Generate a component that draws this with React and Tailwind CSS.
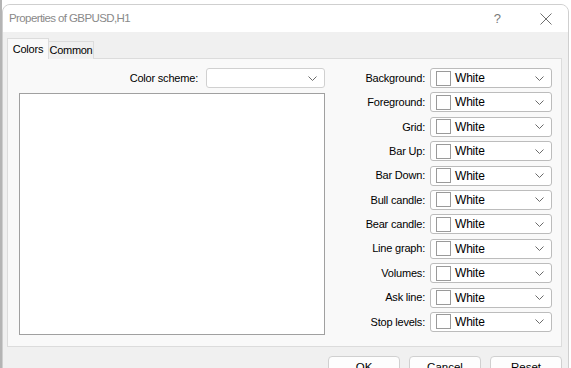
import React from "react";

const FONT = { fontFamily: '"Liberation Sans", Arial, sans-serif' };

function Chevron() {
  return (
    <svg width="9" height="5" viewBox="0 0 9 5" className="shrink-0">
      <path d="M0.5 0.5 L4.5 4.5 L8.5 0.5" fill="none" stroke="#6b6b6b" strokeWidth="1" />
    </svg>
  );
}

function ColorSelect() {
  return (
    <div className="w-[122px] h-[20px] bg-white border border-[#bcbcbc] rounded-[3px] flex items-center pl-[5px] pr-[7px]">
      <div className="w-[15px] h-[15px] border border-[#9a9a9a] bg-white shrink-0" />
      <span className="ml-[4px] flex-1 text-[12px] text-black leading-none tracking-[-0.2px]">White</span>
      <Chevron />
    </div>
  );
}

const rows = [
  "Background:",
  "Foreground:",
  "Grid:",
  "Bar Up:",
  "Bar Down:",
  "Bull candle:",
  "Bear candle:",
  "Line graph:",
  "Volumes:",
  "Ask line:",
  "Stop levels:",
];

export default function App() {
  return (
    <div className="w-[571px] h-[368px] overflow-hidden bg-white flex" style={FONT}>
      <div className="w-[2px] h-full bg-[#b4b4b4] shrink-0" />
      <div className="mt-[4px] w-[567px] h-[400px] rounded-t-[8px] border border-[#cfcfcf] bg-[#f0f0f0] flex flex-col overflow-hidden shrink-0">
        {/* title bar */}
        <div className="h-[27px] bg-white flex items-center pl-[6px] shrink-0">
          <span className="text-[11.5px] text-[#8a8a8a] tracking-[-0.6px]">Properties of GBPUSD,H1</span>
          <span className="ml-auto text-[13px] text-[#7a7a7a] mr-[39px]">?</span>
          <svg width="12" height="12" viewBox="0 0 12 12" className="mr-[16px]">
            <path d="M0.5 0.5 L11.5 11.5 M11.5 0.5 L0.5 11.5" stroke="#6f6f6f" strokeWidth="1" fill="none" />
          </svg>
        </div>
        {/* body */}
        <div className="flex flex-col pl-[4px] pr-[6px] pt-[6px]">
          {/* tabs */}
          <div className="flex items-end h-[21px] relative z-10">
            <div className="h-[21px] w-[42px] bg-[#f9f9f9] border border-b-0 border-[#dcdcdc] flex items-center justify-center text-[11px] text-black tracking-[-0.2px]">
              Colors
            </div>
            <div className="h-[18px] w-[45px] bg-[#f0f0f0] border border-b-0 border-l-0 border-[#dcdcdc] flex items-center justify-center text-[11px] text-black tracking-[-0.3px]">
              Common
            </div>
          </div>
          {/* panel */}
          <div className="-mt-px h-[289px] bg-[#f9f9f9] border border-[#dcdcdc] flex pt-[9px] pl-[11px] pr-[9px]">
            <div className="w-[306px] flex flex-col">
              <div className="flex items-center justify-end h-[20px]">
                <span className="text-[11px] text-black mr-[8px] tracking-[-0.2px]">Color scheme:</span>
                <div className="w-[119px] h-[20px] bg-white border border-[#d0d0d0] rounded-[3px] flex items-center justify-end pr-[7px]">
                  <Chevron />
                </div>
              </div>
              <div className="mt-[5px] h-[242px] bg-white border border-[#a0a0a0]" />
            </div>
            <div className="flex-1 flex flex-col items-end gap-[4.4px]">
              {rows.map((r) => (
                <div key={r} className="flex items-center h-[20px]">
                  <span className="text-[11px] text-black mr-[5px] tracking-[-0.2px]">{r}</span>
                  <ColorSelect />
                </div>
              ))}
            </div>
          </div>
          {/* buttons */}
          <div className="flex justify-end gap-[9px] mt-[9px]">
            {["OK", "Cancel", "Reset"].map((b) => (
              <div
                key={b}
                className="w-[72px] h-[24px] bg-[#fdfdfd] border border-[#d0d0d0] rounded-[4px] flex items-center justify-center text-[11.5px] text-black"
              >
                {b}
              </div>
            ))}
          </div>
        </div>
      </div>
    </div>
  );
}
